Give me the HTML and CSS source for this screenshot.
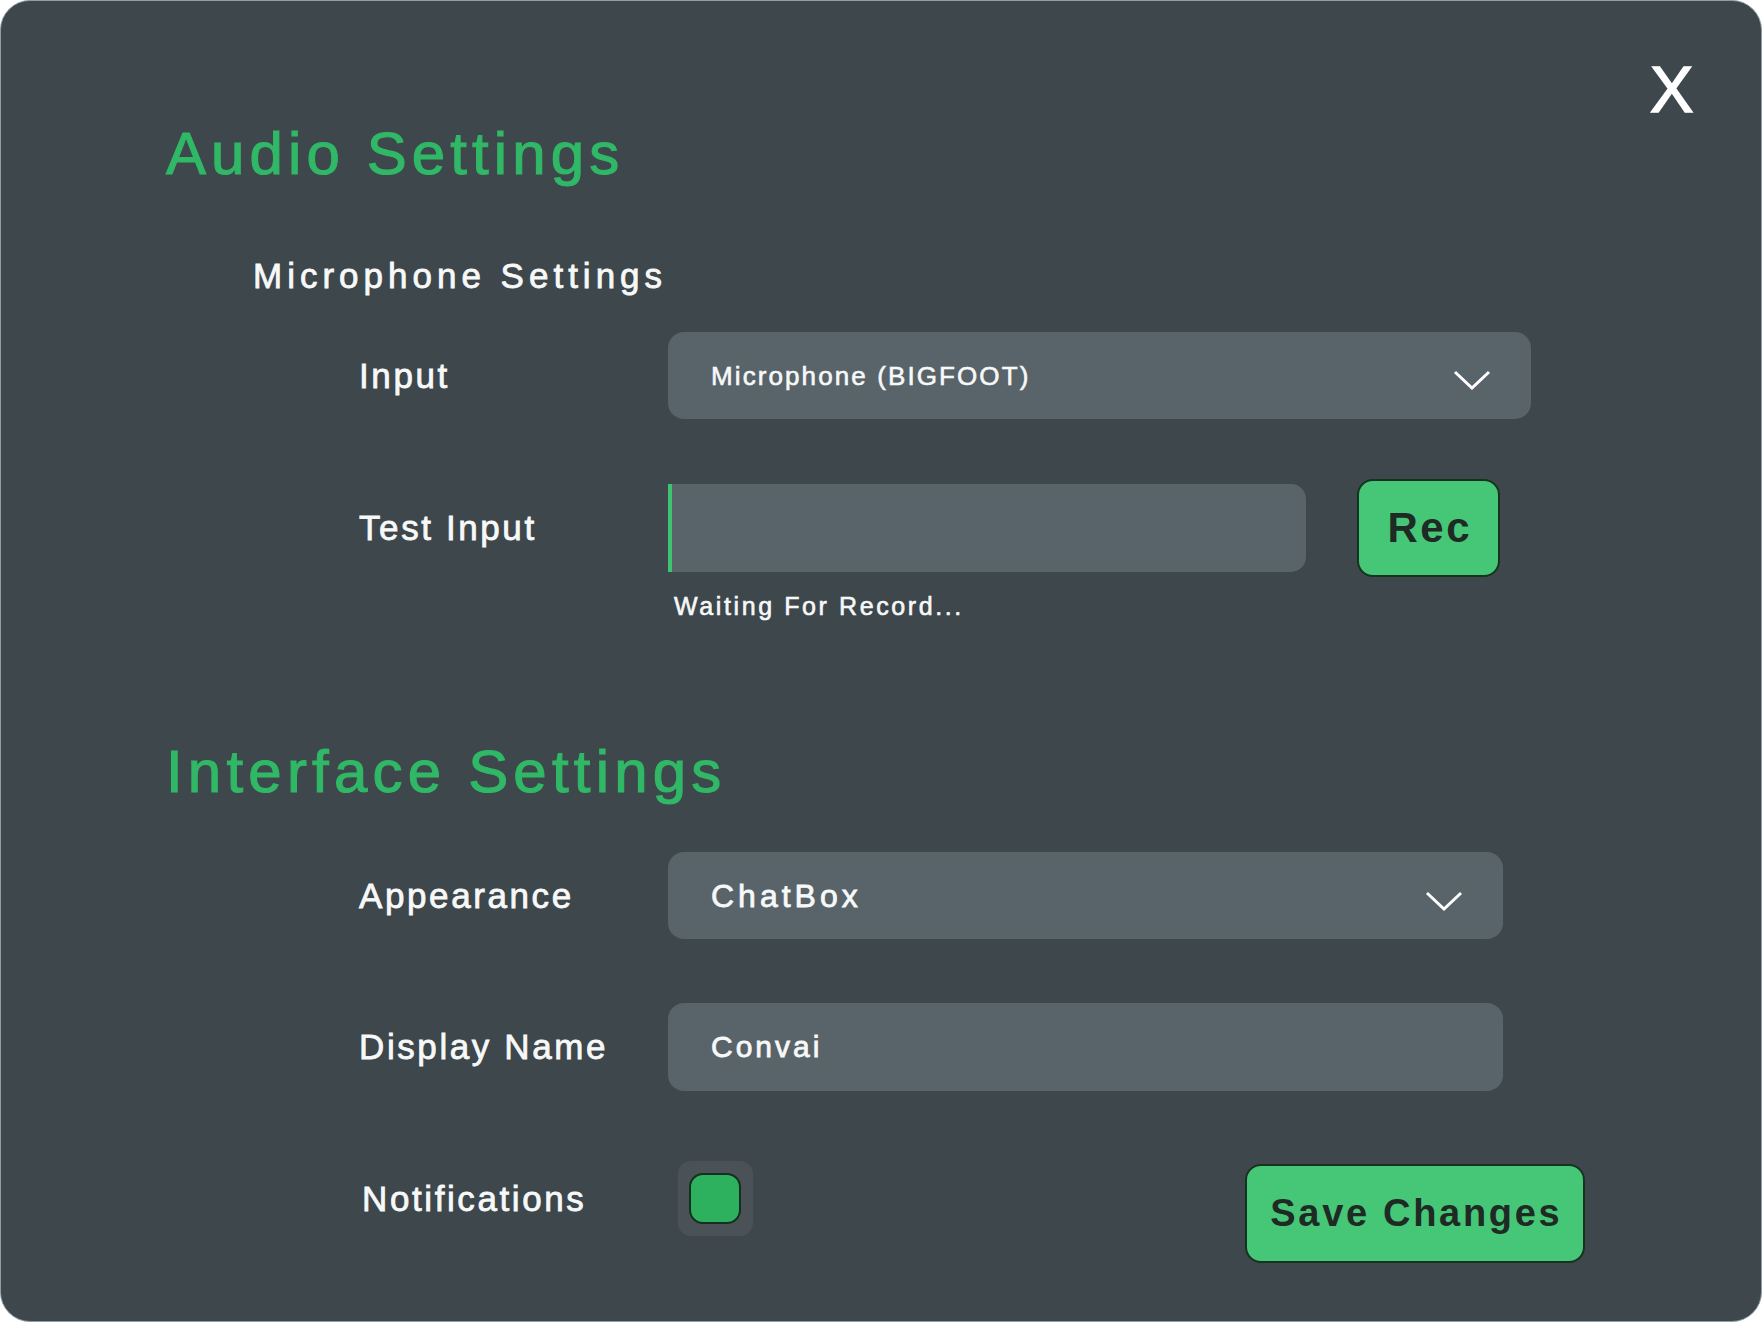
FILE: index.html
```html
<!DOCTYPE html>
<html lang="en">
<head>
<meta charset="utf-8">
<title>Settings</title>
<link rel="stylesheet" href="styles.css">
</head>
<body>
<div class="panel">
  <button class="close" type="button">X</button>

  <h1 class="section-title">Audio Settings</h1>
  <h2 class="sub-title">Microphone Settings</h2>

  <div class="row row-input">
    <span class="label">Input</span>
    <div class="field dropdown wide">
      <span class="field-text small">Microphone (BIGFOOT)</span>
      <svg class="chevron" width="38" height="20" viewBox="0 0 38 20"><polyline points="2,2 19,18 36,2" fill="none" stroke="#ffffff" stroke-width="3"/></svg>
    </div>
  </div>

  <div class="row row-test">
    <span class="label">Test Input</span>
    <div class="field meter"></div>
    <button class="btn btn-rec" type="button">Rec</button>
  </div>
  <p class="status">Waiting For Record...</p>

  <h1 class="section-title second">Interface Settings</h1>

  <div class="row row-appearance">
    <span class="label">Appearance</span>
    <div class="field dropdown">
      <span class="field-text">ChatBox</span>
      <svg class="chevron" width="38" height="20" viewBox="0 0 38 20"><polyline points="2,2 19,18 36,2" fill="none" stroke="#ffffff" stroke-width="3"/></svg>
    </div>
  </div>

  <div class="row row-name">
    <span class="label">Display Name</span>
    <div class="field">
      <span class="field-text name">Convai</span>
    </div>
  </div>

  <div class="row row-notify">
    <span class="label label-notify">Notifications</span>
    <div class="checkbox"><div class="checkbox-fill"></div></div>
    <button class="btn btn-save" type="button">Save Changes</button>
  </div>
</div>
</body>
</html>
```

FILE: styles.css
```css
html, body {
  margin: 0;
  padding: 0;
  background: #ffffff;
}

body {
  font-family: "Liberation Sans", Arial, sans-serif;
  color: #f7f8f8;
}

.panel {
  position: relative;
  box-sizing: border-box;
  width: 1762px;
  height: 1322px;
  background: #3d474c;
  border: 1px solid #8f9ea5;
  border-radius: 30px;
  padding: 123px 0 0 165px;
  display: flex;
  flex-direction: column;
  align-items: flex-start;
}

.close {
  position: absolute;
  top: 56px;
  left: 1649px;
  background: none;
  border: none;
  padding: 0;
  margin: 0;
  color: #ffffff;
  font-family: "Liberation Sans", Arial, sans-serif;
  font-size: 65px;
  line-height: 65px;
  -webkit-text-stroke: 1.6px #ffffff;
  cursor: pointer;
}

.section-title {
  margin: 0;
  font-size: 60px;
  line-height: 60px;
  font-weight: 400;
  letter-spacing: 5.1px;
  color: #30b866;
  -webkit-text-stroke: 1.1px #30b866;
}

.section-title.second {
  margin-top: 121px;
  letter-spacing: 5.2px;
}

.sub-title {
  margin: 72px 0 0 87px;
  font-size: 35px;
  line-height: 40px;
  font-weight: 400;
  letter-spacing: 5px;
  -webkit-text-stroke: 0.8px #f7f8f8;
}

.row {
  display: flex;
  align-items: center;
  padding-left: 193px;
}

.row-input { margin-top: 36px; }
.row-test { margin-top: 60px; }
.row-appearance { margin-top: 50px; }
.row-name { margin-top: 64px; }
.row-notify {
  margin-top: 70px;
  align-items: flex-start;
}

.label {
  width: 309px;
  flex: none;
  font-size: 35px;
  line-height: 40px;
  letter-spacing: 2.6px;
  -webkit-text-stroke: 0.8px #f7f8f8;
}

.label-notify {
  margin-top: 18px;
  padding-left: 3px;
  width: 318px;
  box-sizing: border-box;
}

.field {
  box-sizing: border-box;
  width: 835px;
  height: 88px;
  background: #59646a;
  border-radius: 16px;
  display: flex;
  align-items: center;
  padding: 0 40px 0 43px;
}

.field.wide {
  width: 863px;
  height: 87px;
}

.row-appearance .field { height: 87px; }

.dropdown {
  justify-content: space-between;
}

.field-text {
  font-size: 32px;
  line-height: 36px;
  letter-spacing: 4px;
  -webkit-text-stroke: 0.8px #f7f8f8;
}

.field-text.small {
  font-size: 26px;
  letter-spacing: 2.1px;
  -webkit-text-stroke: 0.6px #f7f8f8;
}

.field-text.name {
  font-size: 30px;
  letter-spacing: 3px;
}

.chevron {
  flex: none;
  margin-top: 10px;
}

.wide .chevron {
  margin-top: 8px;
}

.meter {
  width: 638px;
  height: 88px;
  border-left: 4px solid #3ec470;
  border-radius: 0 15px 15px 0;
}

.btn {
  box-sizing: border-box;
  flex: none;
  background: #46c677;
  border: 2px solid #17321f;
  border-radius: 16px;
  color: #1f2a24;
  font-family: "Liberation Sans", Arial, sans-serif;
  font-weight: 700;
  display: flex;
  align-items: center;
  justify-content: center;
  padding: 0;
  cursor: pointer;
}

.btn-rec {
  width: 143px;
  height: 98px;
  margin-left: 51px;
  font-size: 42px;
  letter-spacing: 2.5px;
  text-indent: 2.5px;
}

.status {
  margin: 14px 0 0 508px;
  font-size: 25px;
  line-height: 30px;
  letter-spacing: 2.6px;
  -webkit-text-stroke: 0.6px #f7f8f8;
}

.checkbox {
  box-sizing: border-box;
  flex: none;
  width: 75px;
  height: 75px;
  margin-left: 1px;
  background: #4a5258;
  border-radius: 13px;
  display: flex;
  align-items: center;
  justify-content: center;
}

.checkbox-fill {
  box-sizing: border-box;
  width: 52px;
  height: 51px;
  background: #2eb15f;
  border: 2px solid #15301e;
  border-radius: 14px;
  margin-right: 1px;
}

.btn-save {
  width: 340px;
  height: 99px;
  margin-top: 3px;
  margin-left: 492px;
  font-size: 38px;
  letter-spacing: 2.7px;
  text-indent: 2.7px;
}
```
